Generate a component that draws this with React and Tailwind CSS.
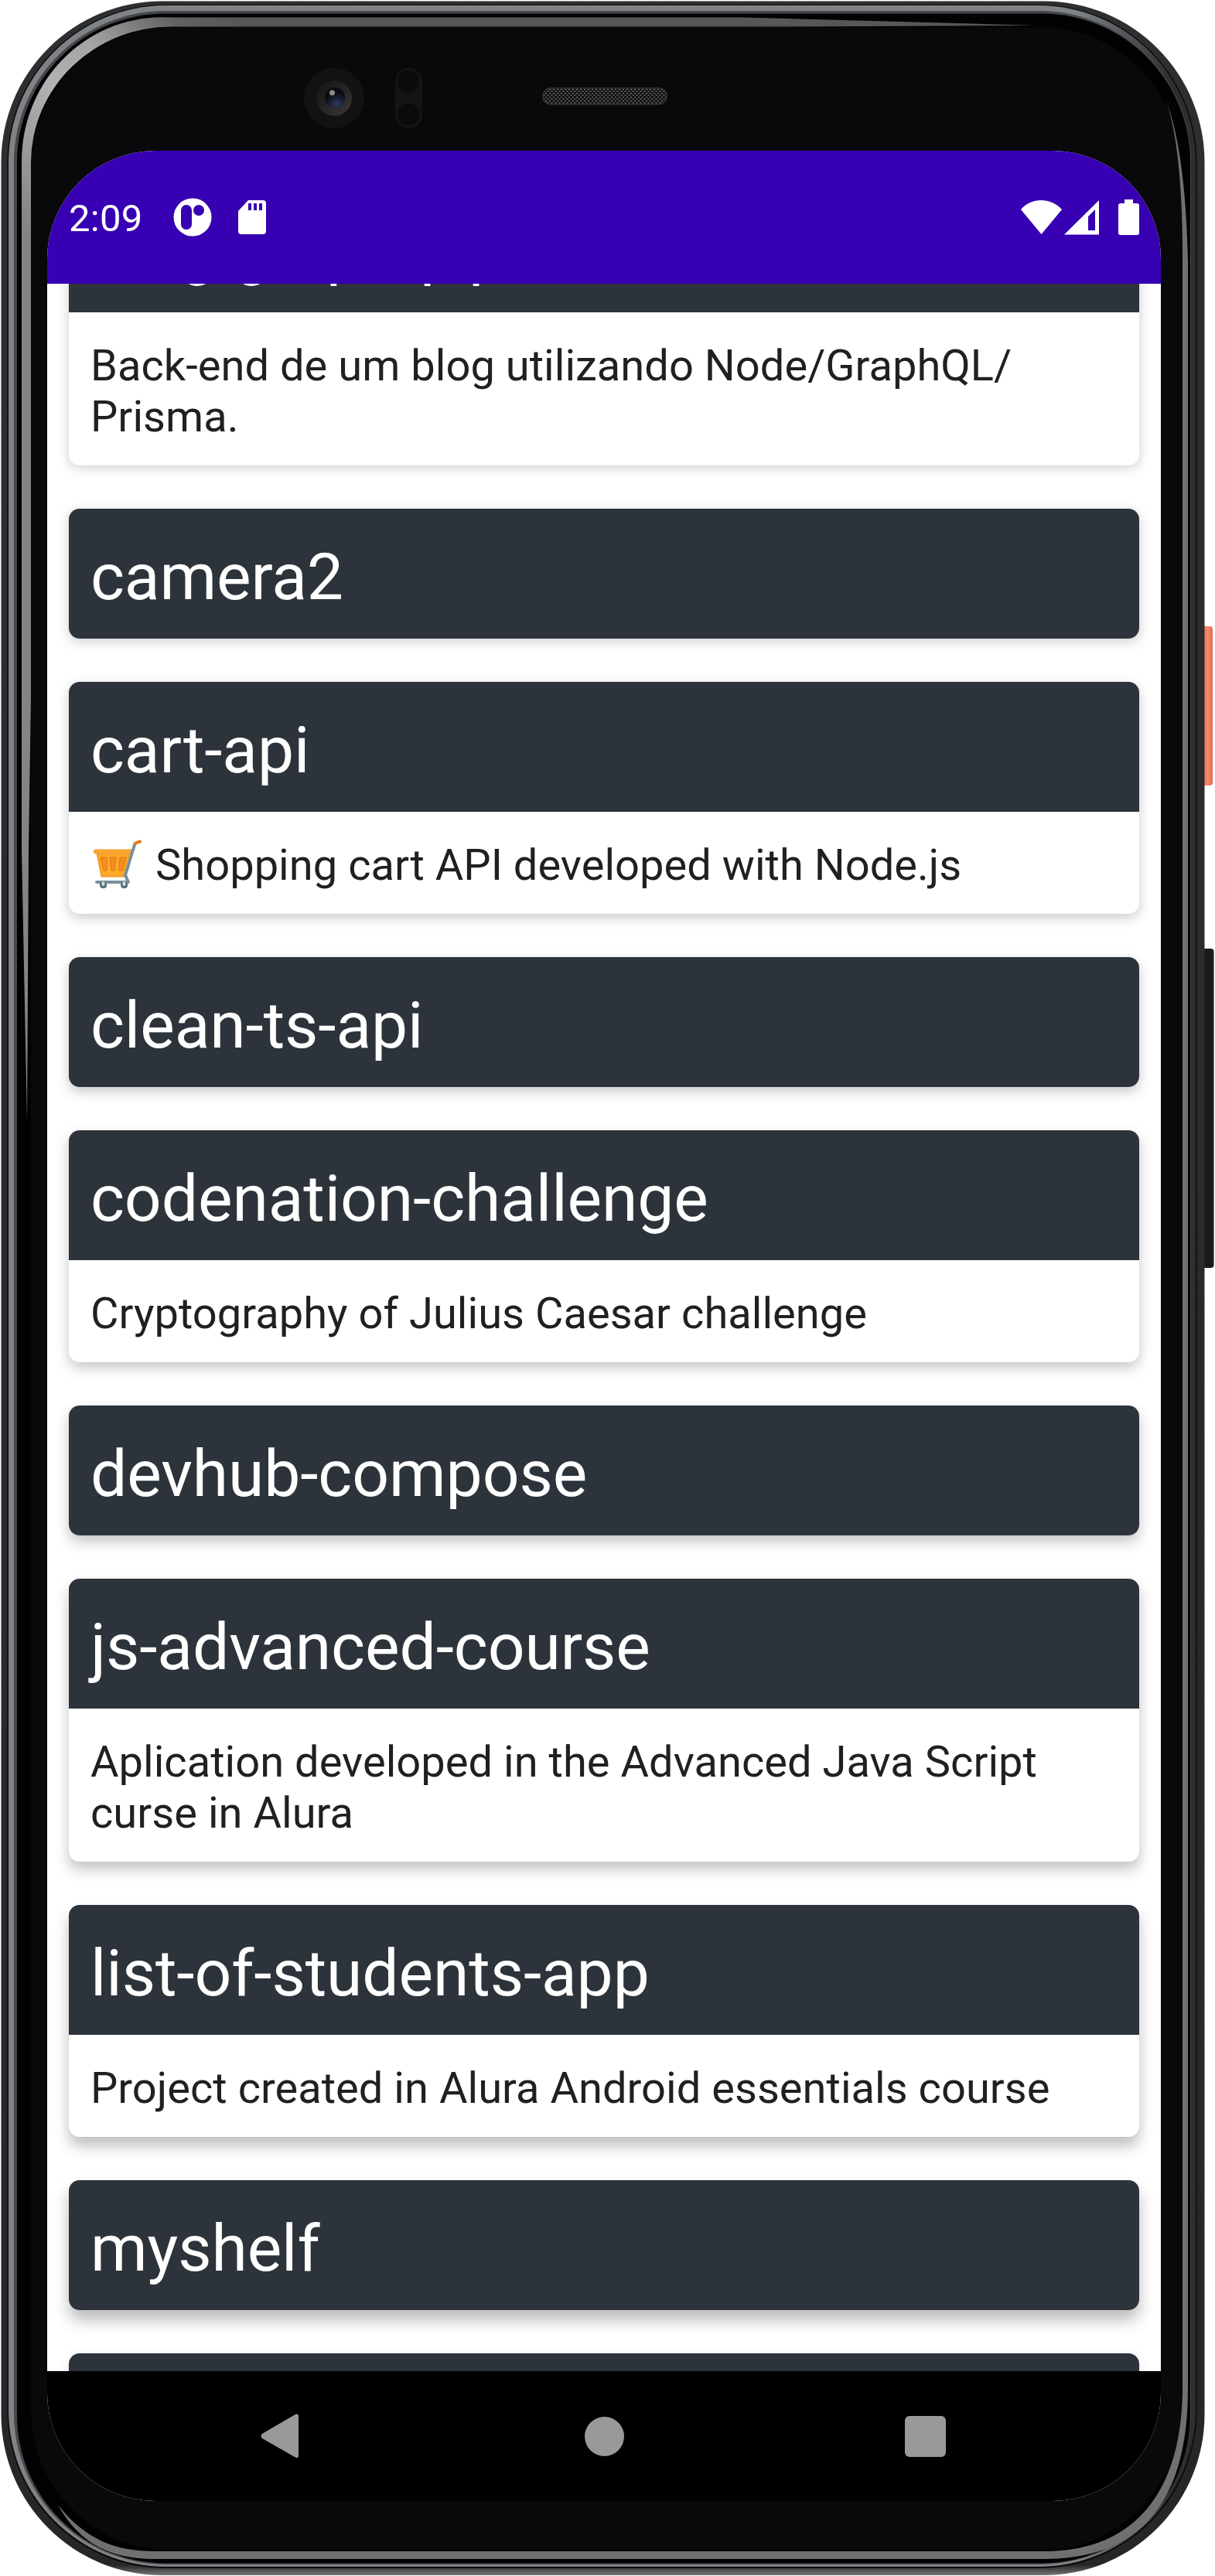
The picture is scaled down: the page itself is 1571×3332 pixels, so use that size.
const repos = [
  { name: "blog-graphql-prisma", lines: ["Back-end de um blog utilizando Node/GraphQL/", "Prisma."], shadow: "shadow-[0_3px_16px_rgba(0,0,0,0.2)]" },
  { name: "camera2", shadow: "shadow-[0_4px_16px_rgba(0,0,0,0.2)]" },
  { name: "cart-api", lines: ["Shopping cart API developed with Node.js"], cart: true, shadow: "shadow-[0_5px_16px_rgba(0,0,0,0.21)]" },
  { name: "clean-ts-api", shadow: "shadow-[0_6px_16px_rgba(0,0,0,0.22)]" },
  { name: "codenation-challenge", lines: ["Cryptography of Julius Caesar challenge"], shadow: "shadow-[0_7px_17px_rgba(0,0,0,0.23)]" },
  { name: "devhub-compose", shadow: "shadow-[0_8px_17px_rgba(0,0,0,0.24)]" },
  { name: "js-advanced-course", lines: ["Aplication developed in the Advanced Java Script", "curse in Alura"], shadow: "shadow-[0_10px_18px_rgba(0,0,0,0.24)]" },
  { name: "list-of-students-app", lines: ["Project created in Alura Android essentials course"], shadow: "shadow-[0_12px_18px_rgba(0,0,0,0.25)]" },
  { name: "myshelf", shadow: "shadow-[0_13px_20px_rgba(0,0,0,0.27)]" },
  { name: "", shadow: "shadow-[0_4px_14px_rgba(0,0,0,0.12)]" },
];

function Cart() {
  return (
    <svg className="mr-[18px] mt-[-1px] h-[66px] w-[66px] shrink-0" viewBox="0 0 66 66">
      <path d="M8 18H53L44 49H14Z" fill="#ffa726" stroke="#e08a1e" strokeWidth="1" />
      <rect x="4.500" y="14" width="50" height="5" rx="1.500" fill="#ffa62b" stroke="#e39a3d" strokeWidth="1" />
      <path d="M13 24h8v17h-4zM25 24h8l-2 17h-4zM38 24h8l-4 17h-5z" fill="#f78c1f" stroke="#d9791a" strokeWidth="1" />
      <path d="M57.500 6L45 47L49 56H8" fill="none" stroke="#78909c" strokeWidth="4" strokeLinecap="round" strokeLinejoin="round" />
      <path d="M58.500 5.500L64 3.500" stroke="#ef7d1a" strokeWidth="4" strokeLinecap="round" />
      <rect x="12" y="55" width="9" height="9" rx="4" fill="#546e7a" />
      <rect x="39" y="55" width="9" height="9" rx="4" fill="#546e7a" />
      <rect x="14.500" y="55" width="4" height="6" rx="2" fill="#cfd8dc" />
      <rect x="41.500" y="55" width="4" height="6" rx="2" fill="#cfd8dc" />
    </svg>
  );
}

function RepoCard({ name, lines, cart, shadow }) {
  return (
    <article className={`shrink-0 overflow-hidden rounded-[14px] bg-white ${shadow}`}>
      <h2 className="h-[168px] whitespace-nowrap bg-[#2d333b] px-[28px] pt-[30px] text-[84px] leading-[118px] tracking-[-0.1px] text-white">{name}</h2>
      {lines && (
        <div className="px-[28px] pb-[30px] pt-[36px] text-[56px] leading-[66px] tracking-[0.04px] text-[#202020]">
          {lines.map((line) => (
            <p key={line} className="flex h-[66px] whitespace-nowrap">
              {cart && <Cart />}
              {line}
            </p>
          ))}
        </div>
      )}
    </article>
  );
}

function StatusBar() {
  return (
    <header className="flex h-[172px] shrink-0 items-center bg-[#3700b3] px-[28px] text-white">
      <span className="w-[95px] pt-[3px] text-[49px] leading-[60px] tracking-[0.3px]">2:09</span>
      <svg className="ml-[40px] h-[50px] w-[50px]" viewBox="0 0 50 50">
        <circle cx="25" cy="25" r="24.500" fill="#fff" />
        <rect x="10" y="9" width="14" height="32" rx="7" fill="#3700b3" />
        <circle cx="33" cy="16" r="7" fill="#3700b3" />
      </svg>
      <svg className="ml-[33px] h-[46px] w-[38px]" viewBox="0 0 38 46">
        <path d="M14 1H33Q37 1 37 5V41Q37 45 33 45H5Q1 45 1 41V15Z" fill="#fff" />
        <path d="M14 5h4v9h-4zM21 5h4v9h-4zM28 5h4v9h-4z" fill="#3700b3" />
      </svg>
      <svg className="ml-auto h-[46px] w-[156px]" viewBox="0 0 156 46">
        <path d="M3 13C16-3 42-3 56 13L29.500 45Z" fill="#fff" />
        <path fillRule="evenodd" d="M59 45.500L104 1V45.500ZM90 22V40H99V13Z" fill="#fff" />
        <path d="M137 0h11v5h5q3 0 3 3v35q0 3-3 3h-21q-3 0-3-3V8q0-3 3-3h5z" fill="#fff" />
      </svg>
    </header>
  );
}

function NavBar() {
  return (
    <nav className="flex h-[168px] shrink-0 items-center bg-black text-[#999]">
      <svg className="ml-[276px] h-[58px] w-[50px]" viewBox="0 0 50 58">
        <path d="M44 1.500Q49-1.500 49 4V54Q49 59 44 56L2 32Q-1 29 2 26Z" fill="currentColor" />
      </svg>
      <span className="ml-[369px] h-[51px] w-[51px] rounded-full bg-current" />
      <span className="ml-[363px] h-[53px] w-[53px] rounded-[6px] bg-current" />
    </nav>
  );
}

/* Metal body, bezel hardware and side buttons */
function PhoneBody() {
  return (
    <svg className="absolute inset-0 h-[3332px] w-[1571px]" viewBox="0 0 1571 3332">
      <defs>
        <linearGradient id="rim" x1="0" x2="1" y1="0" y2="0">
          <stop offset="0" stopColor="#7f8287" />
          <stop offset="0.900" stopColor="#7f8287" />
          <stop offset="0.980" stopColor="#2c2e30" />
        </linearGradient>
        <linearGradient id="edge" x1="0" x2="0" y1="0" y2="1">
          <stop offset="0" stopColor="#2e2f2e" />
          <stop offset="0.996" stopColor="#262626" />
          <stop offset="1" stopColor="#777" />
        </linearGradient>
        <linearGradient id="gloss" gradientUnits="userSpaceOnUse" x1="28" y1="290" x2="300" y2="22">
          <stop offset="0" stopColor="#848484" />
          <stop offset="0.400" stopColor="#b2b2b2" />
          <stop offset="0.600" stopColor="#a4a4a4" />
          <stop offset="0.850" stopColor="#626262" />
          <stop offset="1" stopColor="#575757" />
        </linearGradient>
        <linearGradient id="power" x1="0" x2="1" y1="0" y2="0">
          <stop offset="0" stopColor="#f0623f" />
          <stop offset="0.600" stopColor="#f28a70" />
          <stop offset="1" stopColor="#e8694c" />
        </linearGradient>
        <linearGradient id="lens" x1="0" x2="1" y1="0" y2="1">
          <stop offset="0" stopColor="#111" />
          <stop offset="1" stopColor="#3a3a3a" />
        </linearGradient>
        <radialGradient id="glass" cx="0.600" cy="0.850" r="0.600">
          <stop offset="0" stopColor="#2c3b64" />
          <stop offset="1" stopColor="#0b0b10" />
        </radialGradient>
        <pattern id="mesh" width="5" height="5" patternUnits="userSpaceOnUse">
          <rect width="5" height="5" fill="#141414" />
          <path d="M0 0h2v1.500h-2zM2.500 2.500h2v1.500h-2z" fill="#6a6a6a" />
        </pattern>
      </defs>
      <rect x="1552" y="810" width="16" height="206" rx="4" fill="url(#power)" />
      <rect x="1552" y="1227" width="17.500" height="413" rx="4" fill="#1a1a1a" />
      <rect x="1.500" y="1.500" width="1556" height="3329.500" rx="208" fill="url(#edge)" />
      <rect x="9.500" y="6" width="1538" height="3316" rx="204" fill="#0a0a0a" />
      <rect x="11" y="7" width="1535" height="3313" rx="203" fill="url(#rim)" />
      <rect x="18" y="14" width="1522" height="3303" rx="196" fill="#46484b" />
      <rect x="22" y="17.500" width="1517" height="3298" rx="192" fill="#020202" />
      <rect x="40" y="35" width="1487" height="3264" rx="182" fill="#09090b" />
      <path d="M28 1100V208A182 186 0 0 1 220 22.500H960L1340 33L1000 34.500H222A182 176 0 0 0 40 210V900L37 1100L35 1450Z" fill="url(#gloss)" />
      <path d="M1508 130C1524 180 1529 250 1529 340V3090C1528 3220 1470 3300 1350 3300H200C150 3300 110 3285 75 3240C105 3295 150 3310 200 3310H1350C1480 3310 1536 3230 1536 3090V340C1534 250 1526 180 1508 130Z" fill="#707070" />
      <circle cx="432" cy="127" r="39" fill="#121213" />
      <circle cx="432" cy="127" r="23" fill="url(#lens)" />
      <circle cx="433" cy="126" r="13" fill="url(#glass)" />
      <circle cx="429.500" cy="120" r="3.500" fill="#8c8c8c" />
      <rect x="511" y="88" width="35" height="78" rx="17" fill="#141415" />
      <circle cx="528" cy="105" r="14" fill="#0b0b0c" />
      <circle cx="528" cy="148" r="14" fill="#0b0b0c" />
      <rect x="702" y="114" width="160" height="21" rx="10" fill="url(#mesh)" stroke="#333" strokeWidth="1.500" />
    </svg>
  );
}

export default function App() {
  return (
    <div className="relative h-[3332px] w-[1571px] overflow-hidden bg-white font-['Roboto',sans-serif]">
      <PhoneBody />
      <div className="relative pl-[61px] pt-[195px]">
        <main className="flex h-[3040px] w-[1440px] flex-col overflow-hidden rounded-[140px] bg-white">
          <StatusBar />
          <section className="flex min-h-0 flex-1 flex-col justify-end overflow-hidden px-[28px]">
            <div className="-mb-[145px] flex shrink-0 flex-col gap-[56px]">
              {repos.map((repo) => (
                <RepoCard key={repo.name} {...repo} />
              ))}
            </div>
          </section>
          <NavBar />
        </main>
      </div>
    </div>
  );
}
